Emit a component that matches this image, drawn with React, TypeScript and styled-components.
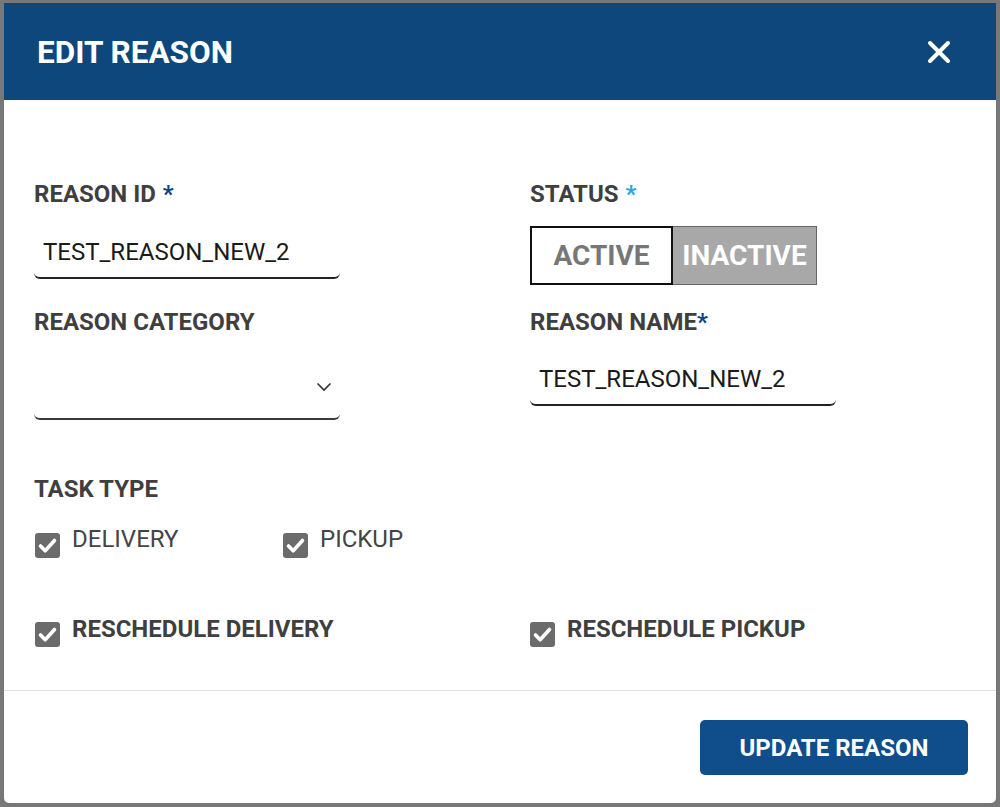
import styled, { createGlobalStyle } from 'styled-components'

const GlobalStyle = createGlobalStyle`
  html, body {
    margin: 0;
    padding: 0;
    background: #787878;
    font-family: Roboto, "Noto Sans", Arial, sans-serif;
  }
  * {
    box-sizing: border-box;
  }
`

const CheckIcon = () => (
  <svg width="25" height="25" viewBox="0 0 25 25">
    <rect x="0" y="0" width="25" height="25" rx="3" fill="#6b6b6b" />
    <path d="M5.5 13 L10.2 17.8 L19.5 7.5" fill="none" stroke="#fff" strokeWidth="3.6" strokeLinecap="round" strokeLinejoin="round" />
  </svg>
)

const ChevronIcon = () => (
  <svg width="16" height="10" viewBox="0 0 16 10">
    <path d="M1.5 1.5 L8 8 L14.5 1.5" fill="none" stroke="#333" strokeWidth="1.6" />
  </svg>
)

const CloseIcon = () => (
  <svg width="24" height="24" viewBox="0 0 24 24">
    <path d="M3 3 L21 21 M21 3 L3 21" stroke="#fff" strokeWidth="4" strokeLinecap="round" />
  </svg>
)

const App = () => {
  return (
    <>
      <GlobalStyle />
      <Modal>
        <Header>
          <Title>EDIT REASON</Title>
          <CloseButton aria-label="close">
            <CloseIcon />
          </CloseButton>
        </Header>

        <Body>
          <FieldGrid>
            <Field>
              <Label>
                REASON ID <Star>*</Star>
              </Label>
              <TextInput $top={29}>TEST_REASON_NEW_2</TextInput>
            </Field>
            <Field>
              <Label>
                STATUS <Star $light>*</Star>
              </Label>
              <Toggle>
                <ToggleOption>ACTIVE</ToggleOption>
                <ToggleOption $selected>INACTIVE</ToggleOption>
              </Toggle>
            </Field>
            <Field>
              <Label>REASON CATEGORY</Label>
              <Select>
                <ChevronIcon />
              </Select>
            </Field>
            <Field>
              <Label>
                REASON NAME<Star $tight>*</Star>
              </Label>
              <TextInput $top={28}>TEST_REASON_NEW_2</TextInput>
            </Field>
          </FieldGrid>

          <TaskSection>
            <Label>TASK TYPE</Label>
            <TaskRow>
              <CheckItem $width={248}>
                <CheckBox $offset={6}>
                  <CheckIcon />
                </CheckBox>
                <CheckLabel>DELIVERY</CheckLabel>
              </CheckItem>
              <CheckItem>
                <CheckBox $offset={6}>
                  <CheckIcon />
                </CheckBox>
                <CheckLabel>PICKUP</CheckLabel>
              </CheckItem>
            </TaskRow>
          </TaskSection>

          <RescheduleRow>
            <CheckItem>
              <CheckBox $offset={5}>
                <CheckIcon />
              </CheckBox>
              <CheckLabel $bold>RESCHEDULE DELIVERY</CheckLabel>
            </CheckItem>
            <CheckItem>
              <CheckBox $offset={5}>
                <CheckIcon />
              </CheckBox>
              <CheckLabel $bold>RESCHEDULE PICKUP</CheckLabel>
            </CheckItem>
          </RescheduleRow>
        </Body>

        <Footer>
          <PrimaryButton>UPDATE REASON</PrimaryButton>
        </Footer>
      </Modal>
    </>
  )
}

const Modal = styled.div`
  width: 992px;
  height: 800px;
  margin: 3px 0 0 4px;
  background: #fff;
  border-radius: 0 0 5px 5px;
  display: flex;
  flex-direction: column;
  overflow: hidden;
`

const Header = styled.div`
  height: 97px;
  background: #0e477c;
  display: flex;
  align-items: center;
  justify-content: space-between;
  padding: 0 45px 0 33px;
  flex-shrink: 0;
`

const Title = styled.h1`
  margin: 0;
  margin-top: 2px;
  color: #fff;
  font-size: 31.5px;
  font-weight: 700;
  letter-spacing: 0;
`

const CloseButton = styled.button`
  border: none;
  background: transparent;
  padding: 0;
  display: flex;
  cursor: pointer;
`

const Body = styled.div`
  flex: 1;
  padding: 82px 30px 0 30px;
`

const FieldGrid = styled.div`
  display: grid;
  grid-template-columns: 496px 1fr;
  row-gap: 25px;
`

const Field = styled.div`
  display: flex;
  flex-direction: column;
  align-items: flex-start;
`

const Label = styled.div`
  font-size: 24px;
  line-height: 24px;
  font-weight: 700;
  color: #3f3f3f;
  white-space: nowrap;
`

const Star = styled.span<{ $light?: boolean; $tight?: boolean }>`
  color: ${(p) => (p.$light ? '#2aa5e6' : '#0e477c')};
  margin-left: ${(p) => (p.$tight ? '0' : '1px')};
`

const TextInput = styled.div<{ $top: number }>`
  margin-top: ${(p) => p.$top}px;
  width: 306px;
  height: 44px;
  padding: 0 9px 9px;
  display: flex;
  align-items: center;
  font-size: 24px;
  color: #1a1a1a;
  border-bottom: 2px solid #222;
  border-radius: 0 0 6px 6px;
`

const Select = styled.div`
  margin-top: 42px;
  width: 306px;
  height: 44px;
  padding: 0 8px 0 0;
  display: flex;
  align-items: flex-start;
  justify-content: flex-end;
  border-bottom: 2px solid #3a3a3a;
  border-radius: 0 0 6px 6px;

  > svg {
    margin-top: 6px;
  }
`

const Toggle = styled.div`
  margin-top: 20px;
  display: flex;
  height: 59px;
`

const ToggleOption = styled.div<{ $selected?: boolean }>`
  width: ${(p) => (p.$selected ? '144px' : '143px')};
  display: flex;
  align-items: center;
  justify-content: center;
  font-size: 28px;
  font-weight: 700;
  color: ${(p) => (p.$selected ? '#fff' : '#777')};
  background: ${(p) => (p.$selected ? '#a8a8a8' : '#fff')};
  border: ${(p) => (p.$selected ? '1.5px solid #666' : '2px solid #111')};
  border-left-width: ${(p) => (p.$selected ? '0' : '2px')};
`

const TaskSection = styled.div`
  margin-top: 57px;
`

const TaskRow = styled.div`
  margin-top: 26px;
  display: flex;
  padding-left: 1px;
`

const CheckItem = styled.div<{ $width?: number }>`
  display: flex;
  align-items: flex-start;
  gap: 12px;
  width: ${(p) => (p.$width ? `${p.$width}px` : 'auto')};
`

const CheckBox = styled.div<{ $offset: number }>`
  margin-top: ${(p) => p.$offset}px;
  width: 25px;
  height: 25px;
  display: flex;
`

const CheckLabel = styled.span<{ $bold?: boolean }>`
  font-size: 24px;
  line-height: 24px;
  font-weight: ${(p) => (p.$bold ? 700 : 400)};
  color: ${(p) => (p.$bold ? '#3f3f3f' : '#444')};
  white-space: nowrap;
`

const RescheduleRow = styled.div`
  margin-top: 59px;
  display: grid;
  grid-template-columns: 496px 1fr;
  padding-left: 1px;

  > div:last-child {
    margin-left: -1px;
  }
`

const Footer = styled.div`
  flex-shrink: 0;
  border-top: 1px solid #e3e3e3;
  padding: 29px 28px 28px 0;
  display: flex;
  justify-content: flex-end;
`

const PrimaryButton = styled.button`
  width: 268px;
  height: 55px;
  border: none;
  border-radius: 5px;
  background: #0f4d8b;
  color: #fff;
  font-family: Roboto, "Noto Sans", Arial, sans-serif;
  font-size: 24px;
  font-weight: 700;
  cursor: pointer;
`

export default App
